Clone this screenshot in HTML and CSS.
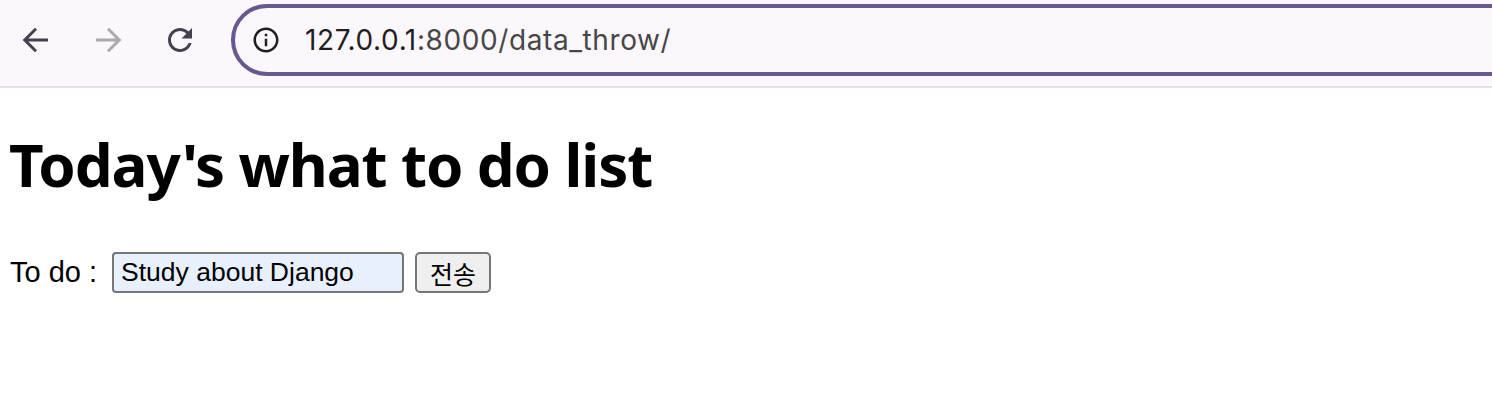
FILE: index.html
```html
<!DOCTYPE html>
<html lang="ko">
<head>
    <meta charset="UTF-8">
    <meta name="viewport" content="width=device-width, initial-scale=1.0">
    <title>data_throw</title>
    <link rel="stylesheet" href="styles.css">
</head>
<body>
    <!-- Browser toolbar -->
    <div class="toolbar">
        <div class="nav-btn">
            <svg width="36" height="36" viewBox="0 0 24 24" fill="none" stroke="#46414f" stroke-width="2">
                <path d="M20 12H4.8M12 4.5L4.5 12l7.5 7.5"/>
            </svg>
        </div>
        <div class="nav-btn">
            <svg width="36" height="36" viewBox="0 0 24 24" fill="none" stroke="#aba8ae" stroke-width="2">
                <path d="M4 12h15.2M12 4.5l7.5 7.5-7.5 7.5"/>
            </svg>
        </div>
        <div class="nav-btn">
            <svg width="36" height="36" viewBox="0 0 24 24" fill="#46414f">
                <path d="M17.65 6.35C16.2 4.9 14.21 4 12 4c-4.42 0-7.99 3.58-7.99 8s3.57 8 7.99 8c3.73 0 6.84-2.55 7.73-6h-2.08c-.82 2.33-3.04 4-5.65 4-3.31 0-6-2.69-6-6s2.69-6 6-6c1.66 0 3.14.69 4.22 1.78L13 11h7V4l-2.35 2.35z"/>
            </svg>
        </div>
        <div class="omnibox">
            <svg class="site-info" width="30" height="30" viewBox="0 0 24 24" fill="#1f1f1f">
                <path d="M11 7h2v2h-2zm0 4h2v6h-2zm1-9C6.48 2 2 6.48 2 12s4.48 10 10 10 10-4.48 10-10S17.52 2 12 2zm0 18c-4.41 0-8-3.59-8-8s3.59-8 8-8 8 3.59 8 8-3.59 8-8 8z"/>
            </svg>
            <span class="url"><span class="host">127.0.0.1</span>:8000/data_throw/</span>
        </div>
    </div>

    <!-- Page -->
    <div class="page">
        <h1 class="heading">Today's what to do list</h1>
        <form class="todo-form" action="/data_throw/" method="GET">
            <label for="todo">To do :</label>
            <input type="text" id="todo" name="todo" value="Study about Django">
            <button type="submit">전송</button>
        </form>
    </div>
</body>
</html>
```

FILE: styles.css
```css
* {
    box-sizing: border-box;
}

body {
    margin: 0;
    background-color: #ffffff;
    color: #000000;
    font-family: "Liberation Sans", Arial, sans-serif;
}

/* Toolbar */
.toolbar {
    display: flex;
    align-items: center;
    height: 88px;
    padding: 4px 0 10px 0;
    background-color: #fcf7fd;
    border-bottom: 2px solid #e5e1e8;
    overflow: hidden;
}

.nav-btn {
    width: 72px;
    height: 72px;
    flex-shrink: 0;
    display: flex;
    align-items: center;
    justify-content: center;
}

.omnibox {
    flex: 1;
    height: 72px;
    margin-left: 15px;
    margin-right: -40px;
    padding-left: 16px;
    display: flex;
    align-items: center;
    border: 4px solid #67598f;
    border-radius: 36px;
}

.site-info {
    flex-shrink: 0;
}

.url {
    margin-left: 24px;
    font-family: Inter, Roboto, sans-serif;
    font-size: 28px;
    letter-spacing: 0.6px;
    color: #474747;
}

.url .host {
    color: #1f1f1f;
}

/* Page */
.page {
    padding: 0 9px;
}

.heading {
    margin: 40px 0 52px 0;
    font-family: "Noto Sans", sans-serif;
    font-size: 60px;
    font-weight: 700;
    letter-spacing: -1.1px;
    line-height: 72px;
}

.todo-form {
    display: flex;
    align-items: center;
    font-size: 29px;
}

.todo-form label {
    margin-left: 1px;
}

.todo-form input {
    width: 292px;
    height: 41px;
    margin-left: 15px;
    padding: 0 7px;
    border: 2px solid #767676;
    border-radius: 4px;
    background-color: #e8f0fe;
    font-family: "Liberation Sans", Arial, sans-serif;
    font-size: 26.5px;
    color: #000000;
}

.todo-form button {
    width: 76px;
    height: 41px;
    margin-left: 11px;
    padding: 0;
    border: 2px solid #767676;
    border-radius: 5px;
    background-color: #efefef;
    font-family: "Noto Sans CJK KR", sans-serif;
    font-size: 25px;
    color: #000000;
}
```
